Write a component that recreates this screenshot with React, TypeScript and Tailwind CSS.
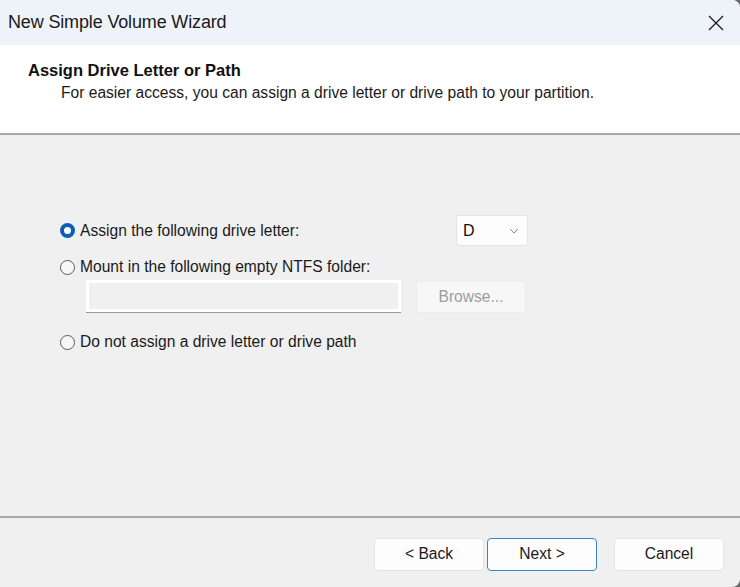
import { useState } from "react";

const Radio = ({ checked, onClick }: { checked: boolean; onClick: () => void }) => (
  <button
    onClick={onClick}
    className={
      "w-[15px] h-[15px] rounded-full flex items-center justify-center shrink-0 " +
      (checked ? "bg-[#0a5fb4]" : "border border-[#5a5a5a] bg-[#f7f7f7]")
    }
  >
    {checked && <span className="w-[7px] h-[7px] rounded-full bg-white" />}
  </button>
);

const WizButton = ({ label, focused }: { label: string; focused?: boolean }) => (
  <button
    className={
      "w-[110px] h-[33px] rounded-[4px] bg-[#fdfdfd] text-[15.6px] text-[#1a1a1a] border " +
      (focused ? "border-[#3c82c8]" : "border-[#e3e3e3]")
    }
  >
    {label}
  </button>
);

export default function App() {
  const [choice, setChoice] = useState(0);

  return (
    <div className="w-[740px] h-[587px] bg-[#6b6b6b] font-['Liberation_Sans',Arial,sans-serif]">
      <div className="w-full h-full flex flex-col bg-[#f0f0f0] rounded-tr-[8px] rounded-br-[8px] overflow-hidden">
        {/* title bar */}
        <div className="h-[45px] bg-[#eef2f9] flex items-center justify-between pl-2 pr-[16px] shrink-0">
          <span className="text-[18px] text-[#1a1a1a] tracking-[-0.15px]">New Simple Volume Wizard</span>
          <svg width="16" height="16" viewBox="0 0 16 16" className="text-[#1a1a1a]">
            <path d="M1 1 L15 15 M15 1 L1 15" stroke="currentColor" strokeWidth="1.3" />
          </svg>
        </div>

        {/* header */}
        <div className="h-[88px] bg-white pl-[28px] pt-[14px] shrink-0">
          <div className="text-[16.5px] font-bold text-[#111] leading-[22px]">Assign Drive Letter or Path</div>
          <div className="text-[15.6px] text-[#1a1a1a] pl-[33px] mt-[1px] leading-[22px]">
            For easier access, you can assign a drive letter or drive path to your partition.
          </div>
        </div>
        <div className="h-[2px] bg-[#a8a8a8] shrink-0" />

        {/* body */}
        <div className="flex-1 pl-[60px] pt-[80px] text-[15.6px] text-[#1a1a1a]">
          <div className="flex items-center w-[468px] h-[31px]">
            <Radio checked={choice === 0} onClick={() => setChoice(0)} />
            <span className="ml-[5px]">Assign the following drive letter:</span>
            <div className="ml-auto w-[72px] h-[31px] bg-[#fdfdfd] border border-[#e3e3e3] rounded-[3px] flex items-center justify-between pl-[6px] pr-[8px]">
              <span className="text-[16px] text-[#111]">D</span>
              <svg width="10" height="6" viewBox="0 0 10 6">
                <path d="M1 1 L5 5 L9 1" fill="none" stroke="#8a8a8a" strokeWidth="1" />
              </svg>
            </div>
          </div>
          <div className="flex items-center h-[24px] mt-[9px]">
            <Radio checked={choice === 1} onClick={() => setChoice(1)} />
            <span className="ml-[5px]">Mount in the following empty NTFS folder:</span>
          </div>
          <div className="flex items-center pl-[26px] mt-[1px] gap-[15px]">
            <div className="w-[315px] h-[33px] bg-white p-[3px] border-b border-[#9a9a9a]">
              <div className="w-full h-full bg-[#f0f0f0]" />
            </div>
            <button className="w-[110px] h-[32px] bg-[#f7f7f7] border border-[#ececec] rounded-[3px] text-[15.6px] text-[#9d9d9d]">
              Browse...
            </button>
          </div>
          <div className="flex items-center h-[24px] mt-[17px]">
            <Radio checked={choice === 2} onClick={() => setChoice(2)} />
            <span className="ml-[5px]">Do not assign a drive letter or drive path</span>
          </div>
        </div>

        <div className="h-[2px] bg-[#a8a8a8] shrink-0" />
        {/* footer */}
        <div className="h-[69px] flex items-center justify-end pr-[16px] pt-[3px] shrink-0">
          <div className="flex gap-[3px]">
            <WizButton label="< Back" />
            <WizButton label="Next >" focused />
          </div>
          <div className="ml-[17px]">
            <WizButton label="Cancel" />
          </div>
        </div>
      </div>
    </div>
  );
}
